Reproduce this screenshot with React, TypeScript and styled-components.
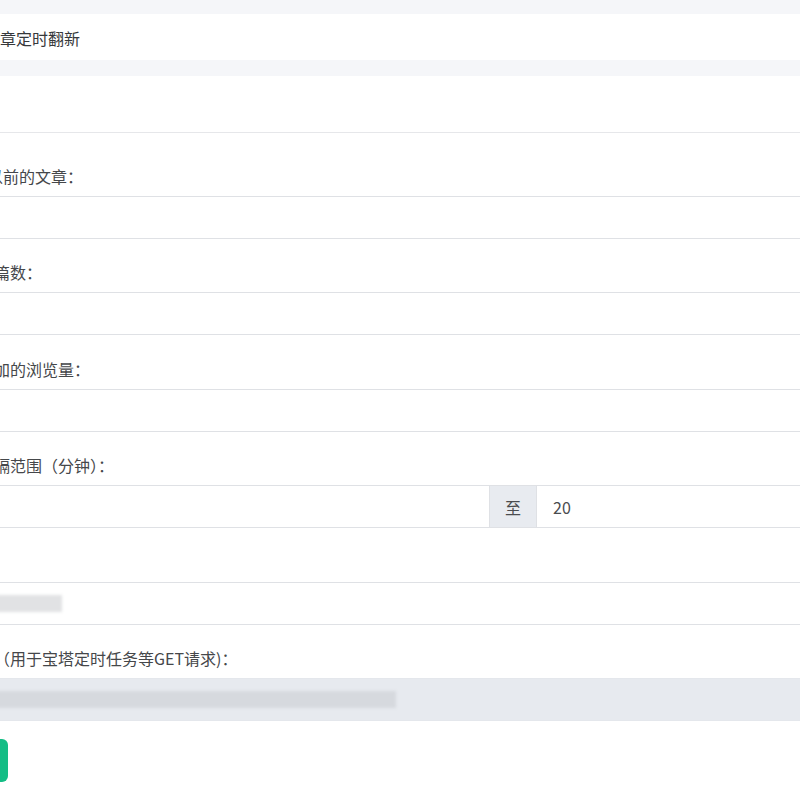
import React from 'react';
import styled, { createGlobalStyle } from 'styled-components';

const GlobalStyle = createGlobalStyle`
  html, body {
    margin: 0;
    padding: 0;
    overflow: hidden;
    background: #f5f6f9;
  }
  body {
    font-family: "Noto Sans CJK SC", "Noto Sans", sans-serif;
    color: #4a4c4f;
  }
`;

const Page = styled.div`
  display: flex;
  flex-direction: column;
  gap: 16px;
  padding-top: 14px;
  margin-left: -54px;
  width: 1134px;
  min-height: 100vh;
  box-sizing: border-box;
`;

const Card = styled.section<{ $fill?: boolean }>`
  background: #fff;
  flex: ${p => (p.$fill ? '1' : 'none')};
`;

const CardHeader = styled.div<{ $height: number; $bordered?: boolean }>`
  height: ${p => p.$height}px;
  display: flex;
  align-items: center;
  padding: 2px 38px 0;
  box-sizing: border-box;
  font-size: 16px;
  color: #36383b;
  border-bottom: ${p => (p.$bordered ? '1px solid #e6e7ea' : 'none')};
`;

const Form = styled.form`
  display: flex;
  flex-direction: column;
  gap: 21.4px;
  padding: 31px 16px 20px;
`;

const Group = styled.div`
  display: flex;
  flex-direction: column;
  gap: 8px;
`;

const Label = styled.label`
  font-size: 16px;
  line-height: 24px;
  color: #45474a;
  white-space: nowrap;
`;

const Input = styled.div<{ $readonly?: boolean }>`
  height: 43px;
  box-sizing: border-box;
  display: flex;
  align-items: center;
  padding: 0 16px;
  font-size: 16px;
  color: #4a4c4f;
  background: ${p => (p.$readonly ? '#e7eaef' : '#fff')};
  border: 1px solid ${p => (p.$readonly ? '#e4e7ec' : '#dfe1e5')};
`;

const InputGroup = styled.div`
  display: flex;
  height: 43px;

  & > ${Input} {
    flex: 1 1 0;
  }
`;

const Addon = styled.span`
  width: 46px;
  flex: none;
  display: flex;
  align-items: center;
  justify-content: center;
  font-size: 16px;
  color: #4a4c4f;
  background: #e8ebf0;
  border-top: 1px solid #dfe1e5;
  border-bottom: 1px solid #dfe1e5;
  box-sizing: border-box;
`;

// masked secret values
const Masked = styled.span<{ $width: number; $tone: string }>`
  display: inline-block;
  width: ${p => p.$width}px;
  height: 17px;
  background: ${p => p.$tone};
  filter: blur(1.5px);
`;

const Actions = styled.div`
  margin-top: -3px;
`;

const SaveButton = styled.button`
  height: 43px;
  padding: 0 9px;
  border: none;
  border-radius: 6px;
  background: #14bd85;
  color: #fff;
  font-family: inherit;
  font-size: 14px;
`;

const fields = [
  '3天以前的文章：',
  '翻新篇数：',
  '新增加的浏览量：',
];

export default function App() {
  return (
    <>
      <GlobalStyle />
      <Page>
        <Card>
          <CardHeader $height={46}>文章定时翻新</CardHeader>
        </Card>
        <Card $fill>
          <CardHeader $height={57} $bordered />
          <Form onSubmit={e => e.preventDefault()}>
            {fields.map(label => (
              <Group key={label}>
                <Label>{label}</Label>
                <Input />
              </Group>
            ))}
            <Group>
              <Label>篇间隔范围（分钟）：</Label>
              <InputGroup>
                <Input />
                <Addon>至</Addon>
                <Input>20</Input>
              </InputGroup>
            </Group>
            <Group>
              <Label>密钥:</Label>
              <Input>
                <Masked $width={83} $tone="#e1e2e4" />
              </Input>
            </Group>
            <Group>
              <Label>链接（用于宝塔定时任务等GET请求)：</Label>
              <Input $readonly>
                <Masked $width={417} $tone="#d6d9de" />
              </Input>
            </Group>
            <Actions>
              <SaveButton type="submit">保存</SaveButton>
            </Actions>
          </Form>
        </Card>
      </Page>
    </>
  );
}
